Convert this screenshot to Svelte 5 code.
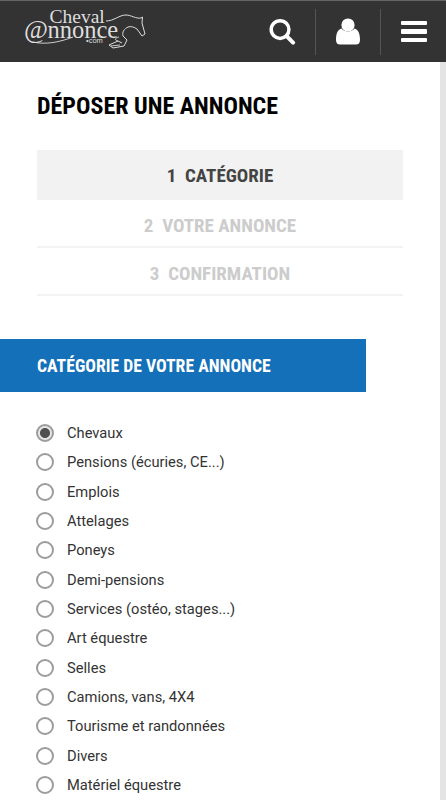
<script>
  const categories = [
    "Chevaux",
    "Pensions (écuries, CE...)",
    "Emplois",
    "Attelages",
    "Poneys",
    "Demi-pensions",
    "Services (ostéo, stages...)",
    "Art équestre",
    "Selles",
    "Camions, vans, 4X4",
    "Tourisme et randonnées",
    "Divers",
    "Matériel équestre"
  ];

  const steps = [
    { num: 1, label: "CATÉGORIE", active: true },
    { num: 2, label: "VOTRE ANNONCE", active: false },
    { num: 3, label: "CONFIRMATION", active: false }
  ];

  let selected = $state("Chevaux");
</script>

<div class="page">
  <header class="header">
    <div class="logo">
      <svg width="126" height="54" viewBox="24 2 126 54" fill="none">
        <text x="49.5" y="23" class="logo-text" font-size="19.5">Cheval</text>
        <text x="24" y="38" class="logo-text" font-size="26">@</text>
        <text x="47.5" y="37.5" class="logo-text" font-size="24.5">nnonce</text>
        <text x="86" y="43" class="logo-small" font-size="7.5">•com</text>
        <path d="M33 42 C46 45 60 42 73 37" stroke="#ddd" stroke-width="0.9" />
        <path d="M106 21 C114 21 119 15 126 15 C131 15 136 19 141 18 L142.5 17 L142 23 L145 34 L142 36 L137 29 C134 27 131 26 128 27 C124 29 122 32 123 36 L127 40 L124 46 L113 48 L109 45 L118 41 L122 43" stroke="#ddd" stroke-width="1" />
        <path d="M111 46 L120 45 M119 37 C115 38 114 40 118 41" stroke="#ddd" stroke-width="0.9" />
      </svg>
    </div>
    <div class="actions">
      <button class="icon-btn search" aria-label="Rechercher">
        <svg width="28" height="27" viewBox="0 0 28 28" fill="none">
          <circle cx="12" cy="12" r="9.2" stroke="#fff" stroke-width="3.6" />
          <path d="M18.8 18.8 L25.5 25.5" stroke="#fff" stroke-width="4.2" stroke-linecap="round" />
        </svg>
      </button>
      <span class="sep"></span>
      <button class="icon-btn user" aria-label="Compte">
        <svg width="24" height="27" viewBox="0 0 24 27">
          <circle cx="12" cy="7" r="6.6" fill="#fff" />
          <path d="M5.5 10.5 C8 14.5 16 14.5 18.5 10.5 C22 11.5 24 15 24 22 C24 25 22.5 26.5 20 26.5 L4 26.5 C1.5 26.5 0 25 0 22 C0 15 2 11.5 5.5 10.5 Z" fill="#fff" />
        </svg>
      </button>
      <span class="sep"></span>
      <button class="icon-btn menu" aria-label="Menu">
        <span></span><span></span><span></span>
      </button>
    </div>
  </header>

  <main class="content">
    <div class="inner">
      <h1 class="title">DÉPOSER UNE ANNONCE</h1>
      <ol class="steps">
        {#each steps as step}
          <li class="step" class:active={step.active}>
            <span>{step.num}&nbsp; {step.label}</span>
          </li>
        {/each}
      </ol>
    </div>

    <h2 class="band">CATÉGORIE DE VOTRE ANNONCE</h2>

    <form class="cats">
      {#each categories as cat}
        <label class="cat">
          <input type="radio" name="cat" value={cat} bind:group={selected} />
          <span class="radio"></span>
          <span class="cat-label">{cat}</span>
        </label>
      {/each}
    </form>
  </main>
</div>

<style>
  :global(body) {
    background: #fff;
    font-family: Roboto, "Liberation Sans", sans-serif;
    color: #333;
    overflow: hidden;
  }

  .page {
    height: 800px;
    overflow: hidden;
  }

  .header {
    height: 61px;
    background: #333;
    border-top: 1px solid #666;
    display: flex;
    justify-content: space-between;
    align-items: center;
    padding-left: 24px;
  }

  .logo {
    display: flex;
    align-self: flex-start;
    margin-top: 1px;
  }

  .logo-text {
    font-family: "Liberation Serif", serif;
    fill: #ddd;
  }

  .logo-small {
    font-family: "Liberation Sans", sans-serif;
    fill: #ddd;
  }

  .actions {
    display: flex;
    align-items: center;
    height: 100%;
  }

  .icon-btn {
    background: none;
    border: none;
    padding: 0;
    display: flex;
    align-items: center;
    justify-content: center;
    flex-direction: column;
  }

  .search {
    width: 65px;
    padding-right: 2px;
    box-sizing: border-box;
  }

  .user {
    width: 64px;
  }

  .menu {
    width: 65px;
    gap: 4px;
  }

  .menu span {
    display: block;
    width: 26px;
    height: 4.5px;
    background: #fff;
    border-radius: 1px;
  }

  .sep {
    width: 1px;
    height: 46px;
    background: #555;
  }

  .content {
    border-right: 6px solid #e4e4e4;
    height: 738px;
    overflow: hidden;
  }

  .inner {
    padding: 0 37px;
  }

  .title {
    margin: 0;
    padding-top: 29px;
    height: 59px;
    font-size: 24px;
    line-height: 30px;
    font-weight: 700;
    color: #000;
    font-stretch: condensed;
    white-space: nowrap;
  }

  .steps {
    list-style: none;
    margin: 0;
    padding: 0;
  }

  .step {
    box-sizing: border-box;
    height: 48px;
    padding-top: 4px;
    border-bottom: 2px solid #f3f3f3;
    display: flex;
    align-items: center;
    justify-content: center;
    font-size: 19px;
    font-weight: 700;
    font-stretch: condensed;
    color: #ccc;
  }

  .step.active {
    height: 50px;
    padding-top: 1px;
    background: #f2f2f2;
    border-bottom: none;
    color: #444;
  }

  .band {
    margin: 43px 0 0;
    width: 366px;
    height: 53px;
    box-sizing: border-box;
    padding-left: 37px;
    padding-top: 2px;
    background: #1470b8;
    color: #fff;
    font-size: 17.7px;
    font-weight: 700;
    font-stretch: condensed;
    line-height: 51px;
  }

  .cats {
    padding: 26.5px 0 0 36px;
    display: flex;
    flex-direction: column;
  }

  .cat {
    display: flex;
    align-items: center;
    height: 29.33px;
    font-size: 14.7px;
    color: #333;
  }

  .cat input {
    display: none;
  }

  .radio {
    box-sizing: border-box;
    width: 18px;
    height: 18px;
    border-radius: 50%;
    border: 2.5px solid #9c9c9c;
    margin-right: 13px;
    background: #fff;
    flex: none;
  }

  .cat input:checked + .radio {
    background: radial-gradient(circle, #505050 0 4.6px, #e8e8e8 5.4px);
  }
</style>
